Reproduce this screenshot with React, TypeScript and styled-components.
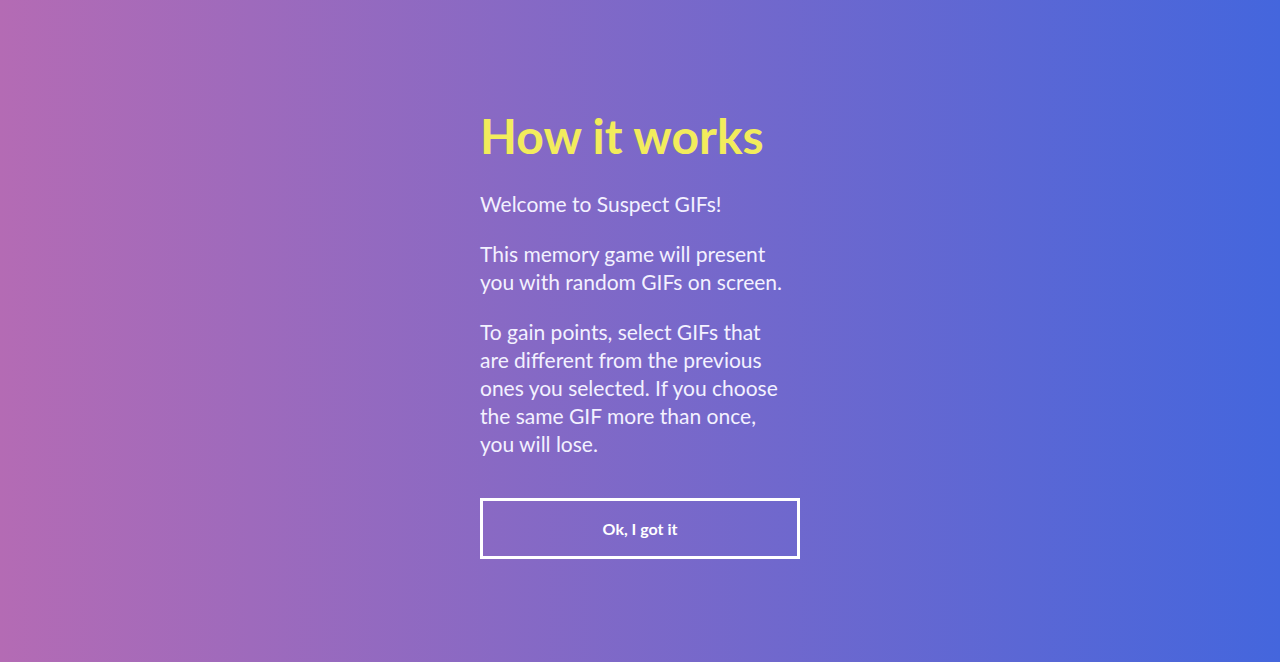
import React from "react";
import styled, { createGlobalStyle } from "styled-components";

const GlobalStyle = createGlobalStyle`
  html, body { margin: 0; padding: 0; }
  body {
    font-family: Lato, "Open Sans", sans-serif;
    background: linear-gradient(90deg, #b46bb4 0%, #4466dd 100%);
    min-height: 100vh;
  }
`;

const Page = styled.main`
  min-height: 100vh;
  display: flex;
  align-items: center;
  justify-content: center;
  background: linear-gradient(90deg, #b46bb4 0%, #4466dd 100%);
`;

const Card = styled.section`
  width: 320px;
  display: flex;
  flex-direction: column;
  color: #f3f1ff;
  margin-top: 3px;
`;

const Title = styled.h1`
  margin: 0 0 25px;
  font-size: 48px;
  line-height: 58px;
  font-weight: 700;
  color: #f2ec5c;
`;

const Text = styled.p`
  margin: 0 0 22px;
  max-width: 306px;
  font-size: 21px;
  line-height: 28px;
`;

const Button = styled.button`
  margin-top: 18px;
  height: 61px;
  background: transparent;
  border: 3px solid #ffffff;
  color: #ffffff;
  font-family: inherit;
  font-weight: 700;
  font-size: 16px;
  cursor: pointer;
`;

export default function App() {
  return (
    <>
      <GlobalStyle />
      <Page>
        <Card>
          <Title>How it works</Title>
          <Text>Welcome to Suspect GIFs!</Text>
          <Text>This memory game will present you with random GIFs on screen.</Text>
          <Text>
            To gain points, select GIFs that are different from the previous ones you selected. If you choose the same GIF more than once, you will lose.
          </Text>
          <Button>Ok, I got it</Button>
        </Card>
      </Page>
    </>
  );
}
